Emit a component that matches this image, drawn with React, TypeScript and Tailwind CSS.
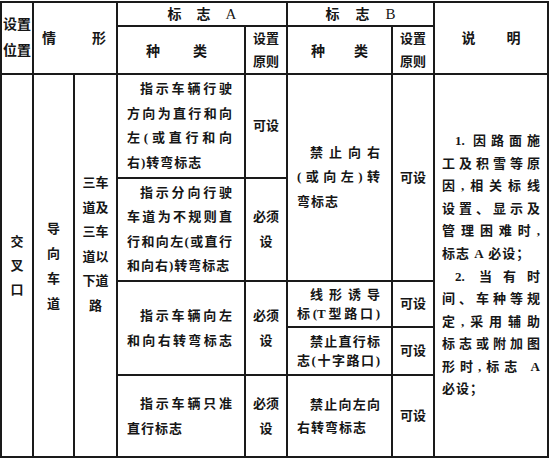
import clsx from "clsx";

type Line = { t: string; full?: boolean; indent?: boolean };

const font = { fontFamily: '"Liberation Serif", "Noto Sans CJK SC", serif' };

const cell = "flex border-r-2 border-b-2 border-[#1a1a1a]";

function Lines({ lines, className }: { lines: Line[]; className?: string }) {
    return (
        <div className={clsx("w-full", className)}>
            {lines.map((l, i) => (
                <div
                    key={i}
                    className={clsx(
                        l.full ? "[text-align-last:justify]" : "tracking-[1px]",
                        l.indent && "indent-[1em]"
                    )}
                >
                    {l.t}
                </div>
            ))}
        </div>
    );
}

function Stack({ chars, className }: { chars: string[]; className?: string }) {
    return (
        <div className={clsx("flex w-full flex-col items-center", className)}>
            {chars.map((c, i) => (
                <div key={i}>{c}</div>
            ))}
        </div>
    );
}

export default function App() {
    return (
        <div className="min-h-[461px] w-[550px] bg-white pt-px text-[#161616]" style={font}>
            <div className="grid w-[549px] grid-cols-[32px_41px_43px_128px_42px_105px_42px_114px] grid-rows-[24px_48px_104px_103px_46px_48px_82px] border-t-2 border-l-2 border-[#1a1a1a] text-[13px] font-bold">
                {/* header */}
                <div className={clsx(cell, "col-start-1 row-start-1 row-span-2 items-center justify-center text-[14px] leading-[26px]")}>
                    <Stack chars={["设置", "位置"]} />
                </div>
                <div className={clsx(cell, "col-start-2 col-span-2 row-start-1 row-span-2 items-center justify-between pl-[8px] pr-[10px] text-[14px]")}>
                    <span>情</span>
                    <span>形</span>
                </div>
                <div className={clsx(cell, "col-start-4 col-span-2 row-start-1 items-center justify-center gap-[15px] text-[14px]")}>
                    <span>标</span>
                    <span>志</span>
                    <span className="text-[15px] font-normal">A</span>
                </div>
                <div className={clsx(cell, "col-start-6 col-span-2 row-start-1 items-center justify-center gap-[16px] text-[14px]")}>
                    <span>标</span>
                    <span>志</span>
                    <span className="text-[15px] font-normal">B</span>
                </div>
                <div className={clsx(cell, "col-start-8 row-start-1 row-span-2 items-center justify-center gap-[31px] text-[14px]")}>
                    <span>说</span>
                    <span>明</span>
                </div>
                <div className={clsx(cell, "col-start-4 row-start-2 items-center justify-center gap-[33px] pr-[9px] pt-[3px] text-[14px]")}>
                    <span>种</span>
                    <span>类</span>
                </div>
                <div className={clsx(cell, "col-start-5 row-start-2 items-center justify-center leading-[23px]")}>
                    <Stack chars={["设置", "原则"]} />
                </div>
                <div className={clsx(cell, "col-start-6 row-start-2 items-center justify-center gap-[29px] pt-[3px] text-[14px]")}>
                    <span>种</span>
                    <span>类</span>
                </div>
                <div className={clsx(cell, "col-start-7 row-start-2 items-center justify-center leading-[23px]")}>
                    <Stack chars={["设置", "原则"]} />
                </div>

                {/* left columns */}
                <div className={clsx(cell, "col-start-1 row-start-3 row-span-5 items-center leading-[24px]")}>
                    <Stack chars={["交", "叉", "口"]} />
                </div>
                <div className={clsx(cell, "col-start-2 row-start-3 row-span-5 items-center leading-[25px]")}>
                    <Stack chars={["导", "向", "车", "道"]} />
                </div>
                <div className={clsx(cell, "col-start-3 row-start-3 row-span-5 items-center pb-[42px] leading-[24.5px]")}>
                    <Stack chars={["三车", "道及", "三车", "道以", "下道", "路"]} />
                </div>

                {/* sign A */}
                <div className={clsx(cell, "col-start-4 row-start-3 items-center pl-[9px] pr-[12px] leading-[24.5px]")}>
                    <Lines
                        lines={[
                            { t: "指示车辆行驶", full: true, indent: true },
                            { t: "方向为直行和向", full: true },
                            { t: "左(或直行和向", full: true },
                            { t: "右)转弯标志" },
                        ]}
                    />
                </div>
                <div className={clsx(cell, "col-start-5 row-start-3 items-center justify-center")}>可设</div>

                <div className={clsx(cell, "col-start-4 row-start-4 items-center pl-[9px] pr-[12px] leading-[24.5px]")}>
                    <Lines
                        lines={[
                            { t: "指示分向行驶", full: true, indent: true },
                            { t: "车道为不规则直", full: true },
                            { t: "行和向左(或直行", full: true },
                            { t: "和向右)转弯标志" },
                        ]}
                    />
                </div>
                <div className={clsx(cell, "col-start-5 row-start-4 items-center leading-[24.5px]")}>
                    <Stack chars={["必须", "设"]} />
                </div>

                <div className={clsx(cell, "col-start-4 row-start-5 row-span-2 items-center pl-[9px] pr-[12px] leading-[25px]")}>
                    <Lines
                        lines={[
                            { t: "指示车辆向左", full: true, indent: true },
                            { t: "和向右转弯标志", full: true },
                        ]}
                    />
                </div>
                <div className={clsx(cell, "col-start-5 row-start-5 row-span-2 items-center leading-[25px]")}>
                    <Stack chars={["必须", "设"]} />
                </div>

                <div className={clsx(cell, "col-start-4 row-start-7 items-center pl-[9px] pr-[12px] leading-[25px]")}>
                    <Lines
                        lines={[
                            { t: "指示车辆只准", full: true, indent: true },
                            { t: "直行标志" },
                        ]}
                    />
                </div>
                <div className={clsx(cell, "col-start-5 row-start-7 items-center leading-[25px]")}>
                    <Stack chars={["必须", "设"]} />
                </div>

                {/* sign B */}
                <div className={clsx(cell, "col-start-6 row-start-3 row-span-2 items-center pl-[9px] pr-[11px] leading-[24.5px]")}>
                    <Lines
                        lines={[
                            { t: "禁止向右", full: true, indent: true },
                            { t: "(或向左)转", full: true },
                            { t: "弯标志" },
                        ]}
                    />
                </div>
                <div className={clsx(cell, "col-start-7 row-start-3 row-span-2 items-center justify-center")}>可设</div>

                <div className={clsx(cell, "col-start-6 row-start-5 items-center pl-[9px] pr-[11px] leading-[19px]")}>
                    <Lines
                        lines={[
                            { t: "线形诱导", full: true, indent: true },
                            { t: "标(T型路口)", full: true },
                        ]}
                    />
                </div>
                <div className={clsx(cell, "col-start-7 row-start-5 items-center justify-center")}>可设</div>

                <div className={clsx(cell, "col-start-6 row-start-6 items-center pl-[9px] pr-[11px] leading-[19px]")}>
                    <Lines
                        lines={[
                            { t: "禁止直行标", full: true, indent: true },
                            { t: "志(十字路口)", full: true },
                        ]}
                    />
                </div>
                <div className={clsx(cell, "col-start-7 row-start-6 items-center justify-center")}>可设</div>

                <div className={clsx(cell, "col-start-6 row-start-7 items-center pl-[9px] pr-[11px] leading-[23px]")}>
                    <Lines
                        lines={[
                            { t: "禁止向左向", full: true, indent: true },
                            { t: "右转弯标志" },
                        ]}
                    />
                </div>
                <div className={clsx(cell, "col-start-7 row-start-7 items-center justify-center")}>可设</div>

                {/* notes */}
                <div className={clsx(cell, "col-start-8 row-start-3 row-span-5 items-center pl-[7px] pr-[7px] leading-[22.6px]")}>
                    <Lines
                        lines={[
                            { t: "1. 因路面施", full: true, indent: true },
                            { t: "工及积雪等原", full: true },
                            { t: "因,相关标线", full: true },
                            { t: "设置、显示及", full: true },
                            { t: "管理困难时,", full: true },
                            { t: "标志 A 必设；" },
                            { t: "2. 当有时", full: true, indent: true },
                            { t: "间、车种等规", full: true },
                            { t: "定,采用辅助", full: true },
                            { t: "标志或附加图", full: true },
                            { t: "形时,标志 A", full: true },
                            { t: "必设；" },
                        ]}
                    />
                </div>
            </div>
        </div>
    );
}
